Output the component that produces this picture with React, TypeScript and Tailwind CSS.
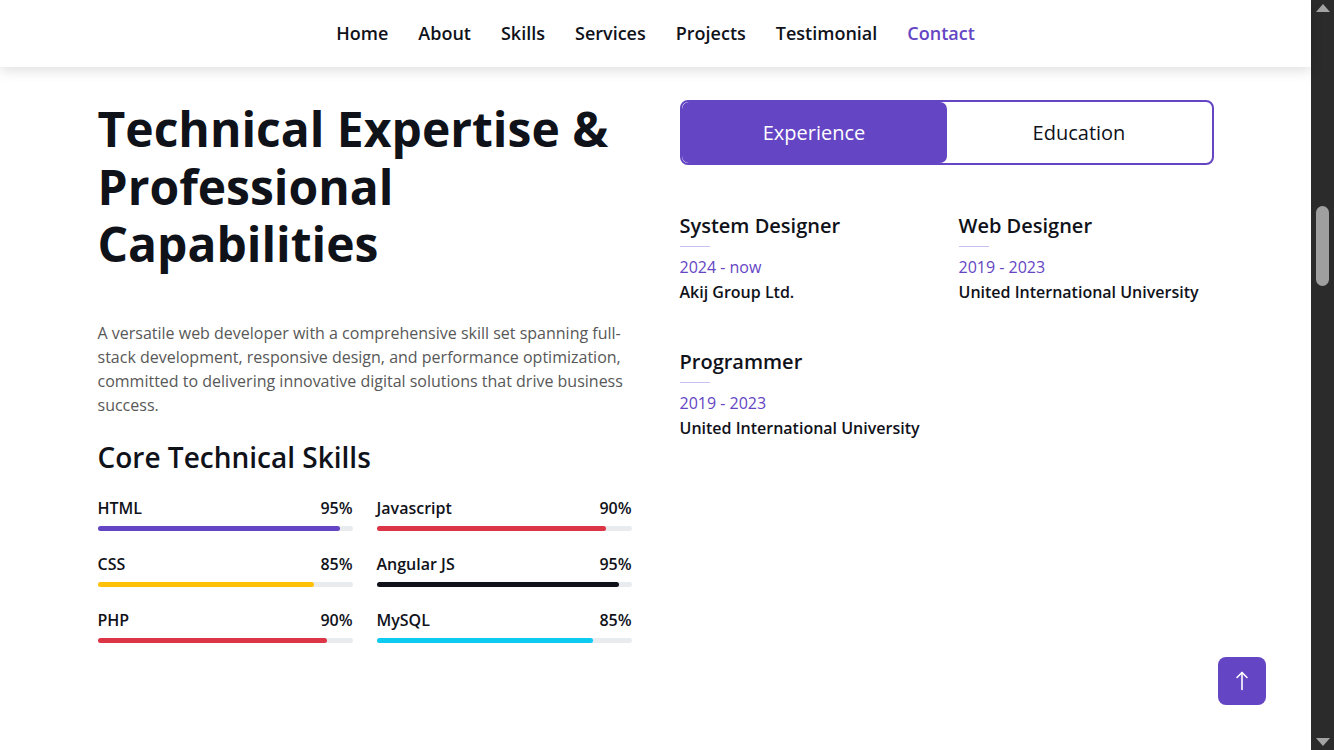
import React from 'react';

const navLinks = ['Home', 'About', 'Skills', 'Services', 'Projects', 'Testimonial', 'Contact'];

const skills = [
  { name: 'HTML', value: 95, color: 'bg-[#6445c4]' },
  { name: 'Javascript', value: 90, color: 'bg-[#dc3545]' },
  { name: 'CSS', value: 85, color: 'bg-[#ffc107]' },
  { name: 'Angular JS', value: 95, color: 'bg-[#10121a]' },
  { name: 'PHP', value: 90, color: 'bg-[#dc3545]' },
  { name: 'MySQL', value: 85, color: 'bg-[#0dcaf0]' },
];

const experience = [
  { title: 'System Designer', date: '2024 - now', place: 'Akij Group Ltd.' },
  { title: 'Web Designer', date: '2019 - 2023', place: 'United International University' },
  { title: 'Programmer', date: '2019 - 2023', place: 'United International University' },
];

const App: React.FC = () => {
  return (
    <div className="flex h-[750px] w-full overflow-hidden bg-white font-['Open_Sans',sans-serif]">
      <div className="relative flex flex-1 flex-col">
        {/* navbar */}
        <header className="relative z-10 flex h-[67px] items-center justify-center gap-[30px] bg-white shadow-[0_4px_12px_rgba(0,0,0,0.12)]">
          {navLinks.map((l) => (
            <a
              key={l}
              className={`text-[18px] font-semibold ${l === 'Contact' ? 'text-[#6445c4]' : 'text-[#10121a]'}`}
            >
              {l}
            </a>
          ))}
        </header>

        <section className="mx-auto flex w-[1116px] gap-[48px] pt-[33px]">
          {/* left */}
          <div className="w-[534px]">
            <h1 className="text-[48px] font-bold leading-[1.2] text-[#10121a]">
              Technical Expertise &amp; Professional Capabilities
            </h1>
            <p className="mt-[48px] text-[16px] leading-6 text-[#585858]">
              A versatile web developer with a comprehensive skill set spanning full-stack development, responsive
              design, and performance optimization, committed to delivering innovative digital solutions that drive
              business success.
            </p>
            <h3 className="mt-[24px] text-[28px] font-semibold leading-[1.2] text-[#10121a]">Core Technical Skills</h3>
            <div className="mt-[22px] grid grid-cols-2 gap-x-[24px]">
              {skills.map((s) => (
                <div key={s.name} className="mb-[21px]">
                  <div className="flex justify-between text-[16px] font-semibold leading-6 text-[#10121a]">
                    <span>{s.name}</span>
                    <span>{s.value}%</span>
                  </div>
                  <div className="mt-[6px] h-[5px] rounded-full bg-[#e9ecef]">
                    <div className={`h-full rounded-full ${s.color}`} style={{ width: `${s.value}%` }} />
                  </div>
                </div>
              ))}
            </div>
          </div>

          {/* right */}
          <div className="w-[534px]">
            <div className="flex h-[65px] rounded-[8px] border-2 border-[#6445c4]">
              <button className="flex-1 rounded-[7px] bg-[#6445c4] text-[20px] text-white">Experience</button>
              <button className="flex-1 text-[20px] text-[#10121a]">Education</button>
            </div>
            <div className="mt-[47px] grid grid-cols-2 gap-x-[24px] gap-y-[44px]">
              {experience.map((e) => (
                <div key={e.title}>
                  <h4 className="text-[20px] font-semibold leading-7 text-[#10121a]">{e.title}</h4>
                  <div className="mt-[6px] h-[1px] w-[30px] bg-[#c9bff0]" />
                  <div className="mt-[8px] text-[16px] leading-6 text-[#6445c4]">{e.date}</div>
                  <div className="mt-[1px] text-[16px] font-semibold leading-6 text-[#10121a]">{e.place}</div>
                </div>
              ))}
            </div>
          </div>
        </section>

        <button className="absolute bottom-[45px] right-[45px] flex h-[48px] w-[48px] items-center justify-center rounded-[8px] bg-[#6445c4] text-white">
          <svg width="24" height="24" viewBox="0 0 24 24" fill="none" stroke="currentColor" strokeWidth="1.6" strokeLinecap="round" strokeLinejoin="round">
            <line x1="12" y1="3.5" x2="12" y2="20.5" />
            <polyline points="7,8.5 12,3.5 17,8.5" />
          </svg>
        </button>
      </div>

      {/* scrollbar */}
      <div className="flex w-[23px] flex-col items-center justify-between bg-[#2b2b2b] py-[4px]">
        <div className="h-0 w-0 border-x-[7px] border-b-[8px] border-x-transparent border-b-[#a3a3a3]" />
        <div className="mb-auto mt-[194px] h-[80px] w-[13px] rounded-full bg-[#9f9f9f]" />
        <div className="h-0 w-0 border-x-[7px] border-t-[8px] border-x-transparent border-t-[#a3a3a3]" />
      </div>
    </div>
  );
};

export default App;
